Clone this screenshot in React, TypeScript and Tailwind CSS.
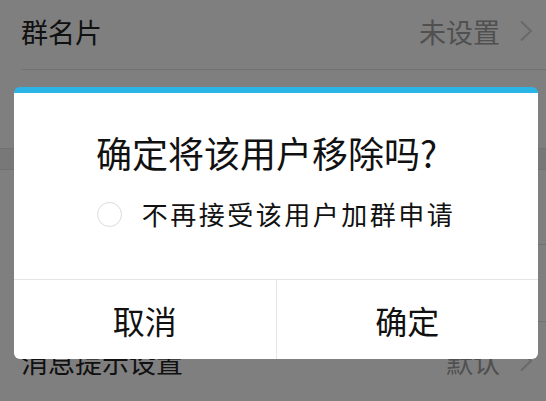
import React from "react";

function Chevron() {
  return (
    <svg width="14" height="22" viewBox="0 0 14 22" className="shrink-0">
      <polyline points="2,1.5 12,11 2,20.5" fill="none" stroke="#d2d2d2" strokeWidth="2" />
    </svg>
  );
}

function Row({
  label,
  value,
  height,
  border = true,
  pb = "",
}: {
  label: string;
  value?: string;
  height: string;
  border?: boolean;
  pb?: string;
}) {
  return (
    <div className={`pl-[21px] ${height}`}>
      <div
        className={`flex h-full items-center pr-[13px] ${pb} ${border ? "border-b border-[#e4e4e4]" : ""}`}
      >
        <span className="flex-1 text-[27px] leading-none text-[#222]">{label}</span>
        {value && <span className="text-[27px] leading-none text-[#a0a0a0]">{value}</span>}
        <span className="ml-[19px] flex items-center">
          <Chevron />
        </span>
      </div>
    </div>
  );
}

export default function App() {
  return (
    <div className="relative h-[401px] w-[546px] overflow-hidden bg-white font-['Noto_Sans_CJK_SC',sans-serif]">
      <div className="flex flex-col">
        <Row label="群名片" value="未设置" height="h-[70px]" pb="pb-[7px]" />
        <Row label="我的群昵称" value="" height="h-[78px]" border={false} />
        <div className="h-[22px] border-y border-[#e2e2e2] bg-[#f0f0f0]" />
        <Row label="置顶聊天" height="h-[75px]" />
        <Row label="免打扰" height="h-[77px]" />
        <Row label="消息提示设置" value="默认" height="h-[78px]" border={false} />
      </div>

      <div className="absolute inset-0 bg-black/50" />

      <div className="absolute left-[14px] top-[87px] flex h-[272px] w-[524px] flex-col overflow-hidden rounded-[6px] border-t-[6px] border-[#2bb4e6] bg-white">
        <div className="flex flex-1 flex-col items-center pt-[39px]">
          <div className="pr-[19px] text-[36px] leading-[40px] text-[#111]">确定将该用户移除吗?</div>
          <div className="mt-[27px] flex h-[30px] items-center gap-[20px]">
            <span className="h-[25px] w-[25px] rounded-full border-[1.5px] border-[#dcdcdc]" />
            <span className="text-[26px] leading-none tracking-[2.5px] text-[#111]">不再接受该用户加群申请</span>
          </div>
        </div>
        <div className="flex h-[80px] border-t border-[#e6e6e6]">
          <div className="flex flex-1 items-center justify-center border-r border-[#e6e6e6] text-[32px] leading-none text-[#111]">
            取消
          </div>
          <div className="flex flex-1 items-center justify-center text-[32px] leading-none text-[#111]">
            确定
          </div>
        </div>
      </div>
    </div>
  );
}
